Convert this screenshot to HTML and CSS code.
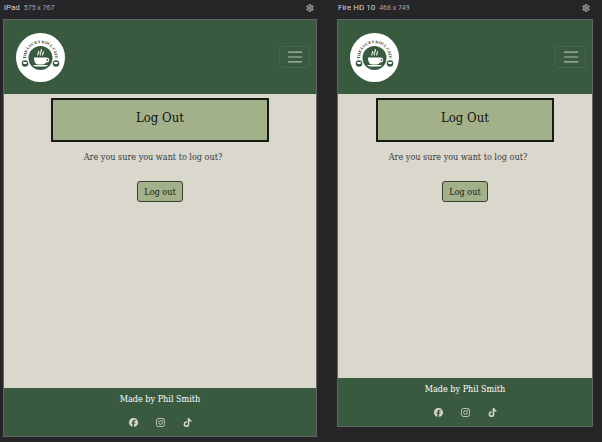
FILE: index.html
```html
<!DOCTYPE html>
<html lang="en">
<head>
<meta charset="utf-8">
<meta name="viewport" content="width=device-width, initial-scale=1">
<title>Log Out</title>
<link rel="stylesheet" href="styles.css">
</head>
<body>
<svg class="sprites" aria-hidden="true">
  <symbol id="gear" viewBox="0 0 16 16">
    <path fill="none" stroke="currentColor" stroke-width="1.8" stroke-linejoin="round" d="M6.600 1.500h2.800l.5 2 1.200.7 2-.6 1.400 2.400-1.500 1.400v1.200l1.500 1.400-1.400 2.400-2-.6-1.200.7-.5 2H6.600l-.5-2-1.200-.7-2 .6L1.500 10 3 8.600V7.400L1.500 6l1.400-2.400 2 .6 1.200-.7z"/>
    <circle cx="8" cy="8" r="2.300" fill="none" stroke="currentColor" stroke-width="1.800"/>
  </symbol>
  <symbol id="logo" viewBox="0 0 98 98" overflow="visible">
    <circle cx="49" cy="49" r="49" fill="#fff"/>
    <path id="arc" fill="none" d="M23 62A29 29 0 1 1 75 62"/>
    <text class="logo-text"><textPath href="#arc" startOffset="50%" text-anchor="middle">THE LUCKY ROLL CAFE</textPath></text>
    <circle cx="49" cy="50" r="24" fill="#3a5a40"/>
    <g fill="#3a5a40"><circle cx="18" cy="61" r="6.500"/><circle cx="80" cy="61" r="6.500"/></g>
    <g fill="#fff"><path d="M14 58h8l-1 4h-6zM76 58h8l-1 4h-6z"/></g>
    <path fill="#fff" d="M36 49h26c0 8-3 14-8 14H44c-5 0-8-6-8-14zM34 64h30c-2 3-5 3-7 3H41c-2 0-5 0-7-3z"/>
    <path fill="none" stroke="#fff" stroke-width="2.200" d="M61 51c6-2 6 7-2 7M44 45c-3-4 4-5 1-9M49 45c-4-5 5-8 1-13M54 45c-3-4 3-5 0-8"/>
  </symbol>
  <symbol id="menu" viewBox="0 0 30 30">
    <path stroke="currentColor" stroke-linecap="round" stroke-width="2" d="M4 7h22M4 15h22M4 23h22"/>
  </symbol>
  <symbol id="facebook" viewBox="0 0 512 512">
    <path fill="currentColor" d="M512 256C512 114.600 397.400 0 256 0S0 114.600 0 256c0 120 82.700 220.800 194.200 248.500V334.200h-52.800V256h52.800v-33.700c0-87.100 39.400-127.500 125-127.500 16.200 0 44.200 3.200 55.700 6.400V172c-6-.6-16.500-1-29.600-1-42 0-58.200 15.900-58.200 57.200V256h83.600l-14.400 78.200h-69.300v175.900C413.800 494.800 512 386.900 512 256z"/>
  </symbol>
  <symbol id="instagram" viewBox="0 0 448 448">
    <g fill="none" stroke="currentColor" stroke-width="42"><rect x="22" y="22" width="404" height="404" rx="112"/><circle cx="224" cy="224" r="94"/></g>
    <circle cx="343" cy="105" r="27" fill="currentColor"/>
  </symbol>
  <symbol id="tiktok" viewBox="0 0 448 512">
    <path fill="currentColor" d="M448 209.900a210.100 210.100 0 0 1-122.800-39.300v178.800A162.600 162.600 0 1 1 185 188.300v89.900a74.600 74.600 0 1 0 52.200 71.200V0h88a121.200 121.200 0 0 0 122.800 121.200z"/>
  </symbol>
</svg>

<main class="devices">
  <section class="device">
    <header class="device-bar">
      <h2 class="device-name">iPad</h2>
      <span class="device-size">575 x 767</span>
      <button class="settings" aria-label="iPad settings"><svg><use href="#gear"/></svg></button>
    </header>
    <div class="screen screen-ipad">
      <nav class="navbar">
        <a class="brand" href="#" aria-label="Home"><svg><use href="#logo"/></svg></a>
        <button class="toggler" aria-label="Toggle navigation"><svg><use href="#menu"/></svg></button>
      </nav>
      <div class="content">
        <h1 class="title">Log Out</h1>
        <p class="question">Are you sure you want to log out?</p>
        <button class="logout">Log out</button>
      </div>
      <footer class="footer">
        <p class="credit">Made by Phil Smith</p>
        <div class="social">
          <a href="#" aria-label="Facebook"><svg><use href="#facebook"/></svg></a>
          <a href="#" aria-label="Instagram"><svg><use href="#instagram"/></svg></a>
          <a href="#" aria-label="TikTok"><svg><use href="#tiktok"/></svg></a>
        </div>
      </footer>
    </div>
  </section>

  <section class="device">
    <header class="device-bar">
      <h2 class="device-name">Fire HD 10</h2>
      <span class="device-size">468 x 749</span>
      <button class="settings" aria-label="Fire HD 10 settings"><svg><use href="#gear"/></svg></button>
    </header>
    <div class="screen screen-fire">
      <nav class="navbar">
        <a class="brand" href="#" aria-label="Home"><svg><use href="#logo"/></svg></a>
        <button class="toggler" aria-label="Toggle navigation"><svg><use href="#menu"/></svg></button>
      </nav>
      <div class="content">
        <h1 class="title">Log Out</h1>
        <p class="question">Are you sure you want to log out?</p>
        <button class="logout">Log out</button>
      </div>
      <footer class="footer">
        <p class="credit">Made by Phil Smith</p>
        <div class="social">
          <a href="#" aria-label="Facebook"><svg><use href="#facebook"/></svg></a>
          <a href="#" aria-label="Instagram"><svg><use href="#instagram"/></svg></a>
          <a href="#" aria-label="TikTok"><svg><use href="#tiktok"/></svg></a>
        </div>
      </footer>
    </div>
  </section>
</main>
</body>
</html>
```
FILE: styles.css
```css
* {
  box-sizing: border-box;
}

body {
  margin: 0;
  background: #262629;
  font-family: "DejaVu Serif Condensed", "DejaVu Serif", serif;
}

h1, h2, p {
  margin: 0;
  font-weight: 400;
}

button {
  padding: 0;
  font: inherit;
}

svg {
  display: block;
  width: 100%;
  height: 100%;
  overflow: visible;
}

.sprites {
  position: absolute;
  width: 0;
  height: 0;
}

.devices {
  display: grid;
  grid-template-columns: 314fr 256fr;
  align-items: start;
  gap: 20px;
  padding: 0 9px 0 3px;
}

.device-bar {
  display: flex;
  align-items: center;
  gap: 4px;
  height: 19px;
  padding: 0 3px 4px 1px;
  font-family: Roboto, sans-serif;
  font-size: 7px;
  line-height: 10px;
  color: #a5a5a9;
}

.device-name {
  font-size: 8px;
  color: #d4d4d8;
}

.settings {
  width: 8px;
  height: 8px;
  margin-left: auto;
  border: 0;
  background: none;
  color: #d0d0d4;
}

.screen {
  display: flex;
  flex-direction: column;
  border: 1px solid #606462;
  background: #dad7cd;
}

.screen-ipad {
  aspect-ratio: 314 / 418;
}

.screen-fire {
  aspect-ratio: 256 / 408;
}

.navbar {
  display: flex;
  align-items: center;
  justify-content: space-between;
  height: 74px;
  padding: 0 6px 0 12px;
  background: #3a5a40;
}

.brand {
  width: 49px;
  height: 49px;
}

.logo-text {
  font-family: "Liberation Serif", serif;
  font-size: 8px;
  font-weight: 700;
  fill: #222;
}

.toggler {
  display: grid;
  place-items: center;
  width: 31px;
  height: 22px;
  border: 1px solid #47664d;
  border-radius: 3px;
  background: none;
  color: #b0bcb0;
}

.toggler svg {
  width: 18px;
  height: 18px;
}

.content {
  display: flex;
  flex: 1;
  flex-direction: column;
  align-items: center;
  padding-top: 4px;
}

.title {
  width: 70%;
  height: 44px;
  padding-top: 9px;
  border: 2px solid #151a12;
  background: #a3b18a;
  font-size: 13px;
  line-height: 18px;
  text-align: center;
  color: #111;
}

.question {
  margin-top: 8px;
  padding-right: 14px;
  font-size: 9px;
  line-height: 14px;
  color: #383c40;
}

.logout {
  width: 46px;
  height: 21px;
  margin-top: 17px;
  border: 1px solid #38402f;
  border-radius: 3px;
  background: #a3b18a;
  font-size: 9px;
  line-height: 14px;
  color: #151a12;
}

.footer {
  height: 48px;
  padding-top: 4px;
  background: #3a5a40;
  color: #fff;
}

.credit {
  font-size: 9px;
  line-height: 14px;
  text-align: center;
}

.social {
  display: flex;
  justify-content: center;
  gap: 18px;
  margin-top: 12px;
}

.social a {
  width: 9px;
  height: 9px;
  color: #dad7cd;
}
```
